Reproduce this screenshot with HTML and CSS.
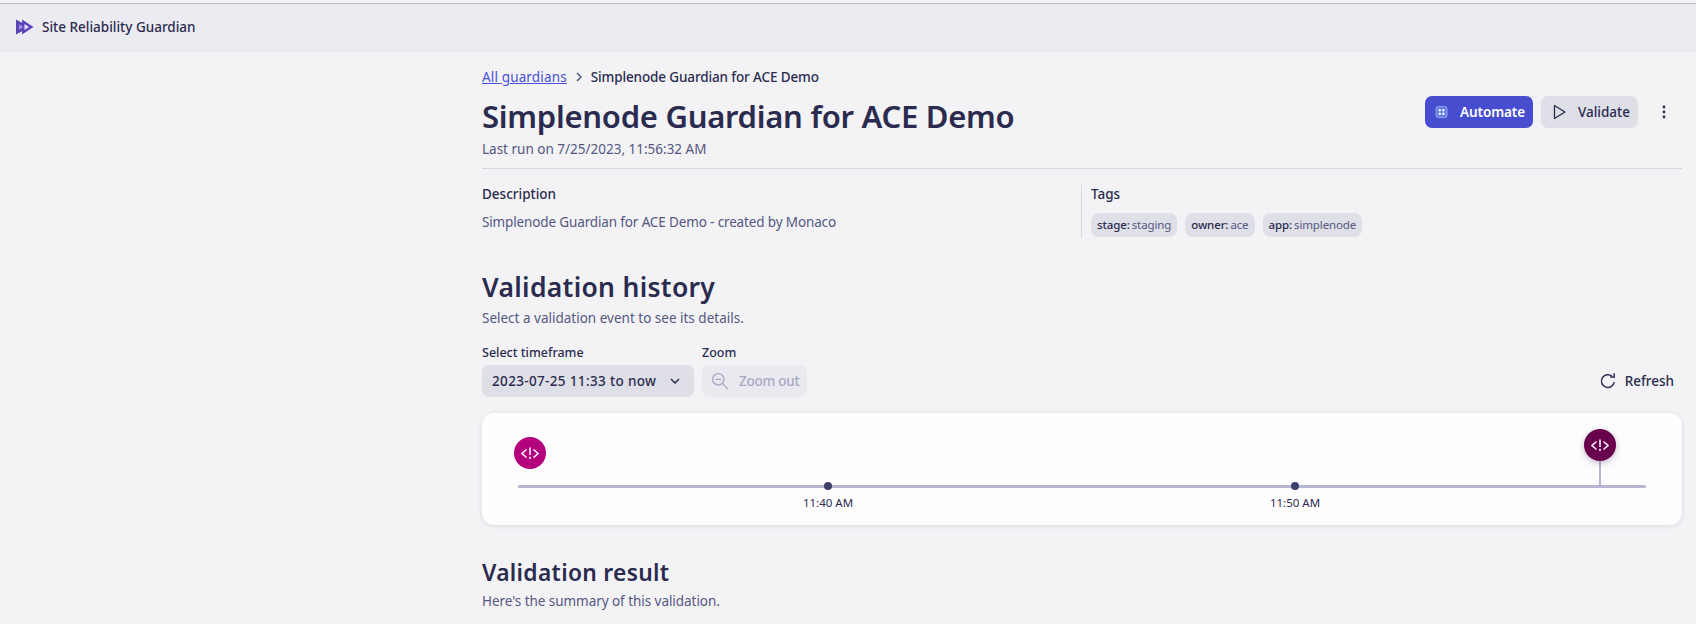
FILE: index.html
```html
<!DOCTYPE html>
<html lang="en">
<head>
<meta charset="utf-8">
<title>Site Reliability Guardian</title>
<link rel="stylesheet" href="styles.css">
</head>
<body>
<header class="appbar">
  <svg class="logo" width="19" height="18" viewBox="0 0 19 18"><path d="M1 1.500l6 3.200V1.500L18.500 9 7 16.500v-3.200l-6 3.200z" fill="#5b44b8"/><path d="M4 6l4.500 3L4 12z" fill="#9d8de0"/><path d="M9.500 6l4.500 3-4.500 3z" fill="#e4dff7"/></svg>
  <span class="appname">Site Reliability Guardian</span>
</header>
<main class="page">
  <nav class="crumbs">
    <a class="crumb-link" href="#">All guardians</a>
    <svg class="crumb-sep" width="8" height="10" viewBox="0 0 8 10"><path d="M2 1l4 4-4 4" fill="none" stroke="#54577f" stroke-width="1.500"/></svg>
    <span class="crumb-current">Simplenode Guardian for ACE Demo</span>
  </nav>
  <div class="titlerow">
    <div>
      <h1 class="title">Simplenode Guardian for ACE Demo</h1>
      <p class="muted lastrun">Last run on 7/25/2023, 11:56:32 AM</p>
    </div>
    <div class="actions">
      <button class="btn btn-primary">
        <svg width="18" height="18" viewBox="0 0 18 18"><rect x="1.500" y="1.500" width="15" height="15" rx="3" fill="#5f7be6" stroke="#b9c6f7"/><rect x="5" y="5" width="3" height="3" fill="#fff"/><rect x="10" y="5" width="3" height="3" fill="#fff"/><rect x="5" y="10" width="3" height="3" fill="#fff"/><rect x="10" y="10" width="3" height="3" fill="#fff"/></svg>
        <span>Automate</span>
      </button>
      <button class="btn btn-neutral">
        <svg width="16" height="16" viewBox="0 0 16 16"><path d="M3.500 1.500v13L14 8z" fill="none" stroke="#2a2b4e" stroke-width="1.300" stroke-linejoin="round"/></svg>
        <span>Validate</span>
      </button>
      <button class="btn-more" aria-label="More">
        <svg width="4" height="14" viewBox="0 0 4 14"><circle cx="2" cy="2" r="1.400"/><circle cx="2" cy="7" r="1.400"/><circle cx="2" cy="12" r="1.400"/></svg>
      </button>
    </div>
  </div>
  <hr class="rule">
  <section class="meta">
    <div class="meta-desc">
      <h3 class="label-strong">Description</h3>
      <p class="muted desc-text">Simplenode Guardian for ACE Demo - created by Monaco</p>
    </div>
    <div class="meta-tags">
      <h3 class="label-strong">Tags</h3>
      <div class="chips">
        <span class="chip"><b>stage:</b> staging</span>
        <span class="chip"><b>owner:</b> ace</span>
        <span class="chip"><b>app:</b> simplenode</span>
      </div>
    </div>
  </section>
  <h2 class="h2">Validation history</h2>
  <p class="muted sub">Select a validation event to see its details.</p>
  <div class="controls">
    <div class="field">
      <label class="field-label">Select timeframe</label>
      <button class="select"><span class="select-text">2023-07-25 11:33 to now</span>
        <svg width="10" height="6" viewBox="0 0 10 6"><path d="M1 1l4 4 4-4" fill="none" stroke="#2a2b4e" stroke-width="1.500"/></svg>
      </button>
    </div>
    <div class="field">
      <label class="field-label">Zoom</label>
      <button class="btn btn-disabled">
        <svg width="18" height="18" viewBox="0 0 16 16" fill="none" stroke="#a8a8c4" stroke-width="1.200"><circle cx="6.500" cy="6.500" r="5"/><path d="M10.300 10.300L15 15M4 6.500h5"/></svg>
        <span class="nowrap">Zoom out</span>
      </button>
    </div>
    <button class="refresh">
      <svg width="18" height="18" viewBox="0 0 16 16" fill="none" stroke="#2a2b4e" stroke-width="1.300"><path d="M13.500 9a5.700 5.700 0 1 1-2-5.300"/><path d="M13.500 1v3.500H10"/></svg>
      <span>Refresh</span>
    </button>
  </div>
  <section class="card">
    <div class="timeline">
      <div class="axis"></div>
      <button class="marker marker-a" aria-label="Validation event">
        <svg width="32" height="32" viewBox="0 0 32 32" fill="none" stroke="#fff" stroke-width="1.500"><path d="M12.500 12.500L8 16.500l4.500 4M19.500 12.500l4.500 4-4.500 4M16 10.500V18M16 19.700V22"/></svg>
      </button>
      <div class="stem"></div>
      <button class="marker marker-b" aria-label="Validation event">
        <svg width="32" height="32" viewBox="0 0 32 32" fill="none" stroke="#fff" stroke-width="1.500"><path d="M12.500 12.500L8 16.500l4.500 4M19.500 12.500l4.500 4-4.500 4M16 10.500V18M16 19.700V22"/></svg>
      </button>
      <div class="tick tick-a"><i class="tick-dot"></i><span class="tick-label">11:40 AM</span></div>
      <div class="tick tick-b"><i class="tick-dot"></i><span class="tick-label">11:50 AM</span></div>
    </div>
  </section>
  <h2 class="h2b">Validation result</h2>
  <p class="muted sub sub-last">Here's the summary of this validation.</p>
</main>
</body>
</html>
```
FILE: styles.css
```css
* { box-sizing: border-box; }
html, body { height: 100%; }
body {
  margin: 0;
  overflow: hidden;
  background: #f3f3f6;
  color: #2a2b4e;
  font-family: "Noto Sans", "Open Sans", sans-serif;
  font-size: 14px;
  line-height: 20px;
}
h1, h2, h3, p { margin: 0; }
button { font: inherit; color: inherit; border: 0; background: none; padding: 0; }
.nowrap { white-space: nowrap; }

.appbar {
  height: 49px;
  margin-top: 3px;
  padding: 0 0 3px 15px;
  display: flex;
  align-items: center;
  gap: 8px;
  background: #ecebf2;
  border-top: 1px solid #bdbdc0;
}
.appname { font-weight: 500; font-size: 13.500px; }

.page { margin-left: 482px; width: 1200px; padding-top: 15px; }

.crumbs { display: flex; align-items: center; height: 20px; gap: 8px; font-size: 13.500px; letter-spacing: -0.130px; }
.crumb-link { color: #4650d8; letter-spacing: 0.150px; }
.crumb-current { font-weight: 500; }

.titlerow { display: flex; justify-content: space-between; align-items: flex-start; margin-top: 7px; }
.title { font-size: 31px; line-height: 44px; font-weight: 600; letter-spacing: -0.270px; }
.muted { color: #54577f; }
.lastrun { font-size: 13.500px; margin-top: 1px; }

.actions { display: flex; align-items: center; gap: 8px; margin-top: 2px; }
.btn {
  height: 32px;
  display: inline-flex;
  align-items: center;
  gap: 11px;
  padding: 0 8px 0 10px;
  border-radius: 7px;
  font-weight: 500;
  font-size: 13.500px;
}
.btn-primary { background: #474dcf; color: #fff; width: 108px; font-weight: 600; letter-spacing: -0.100px; gap: 12px; }
.btn-neutral { background: #dfdfe8; width: 97px; }
.btn-more { width: 36px; height: 32px; display: inline-flex; align-items: center; justify-content: center; fill: #2a2b4e; }
.btn-disabled { background: #e9e9ef; color: #a8a8c4; width: 105px; padding: 0 0 0 9px; gap: 10px; letter-spacing: -0.250px; }

.rule { margin: 9px 0 0; border: 0; height: 1px; background: #d6d6de; }

.meta { display: flex; margin-top: 16px; height: 53px; }
.meta-desc { width: 599px; }
.meta-tags { border-left: 1px solid #d6d6de; padding-left: 9px; }
.label-strong { font-size: 13.500px; line-height: 20px; font-weight: 500; margin-top: -1px; }
.desc-text { font-size: 13.500px; margin-top: 8px; letter-spacing: -0.140px; }
.chips { display: flex; gap: 8px; margin-top: 9px; }
.chip {
  height: 24px;
  display: inline-flex;
  align-items: center;
  gap: 2px;
  padding: 0 6px;
  border-radius: 8px;
  background: #dfdfe8;
  color: #54577f;
  font-size: 11.500px;
  letter-spacing: -0.120px;
  white-space: nowrap;
}
.chip b { font-weight: 500; color: #2a2b4e; }

.h2 { font-size: 26.500px; line-height: 36px; font-weight: 600; margin-top: 31px; letter-spacing: 0.300px; }
.sub { font-size: 13.500px; line-height: 20px; margin-top: 3px; }
.sub-last { letter-spacing: -0.050px; margin-top: 2px; }

.controls { display: flex; align-items: flex-end; gap: 8px; margin-top: 15px; }
.field { display: flex; flex-direction: column; gap: 2px; }
.field-label { font-size: 12.500px; line-height: 20px; font-weight: 500; }
.select {
  width: 212px;
  height: 32px;
  padding: 0 14px 0 10px;
  display: flex;
  align-items: center;
  justify-content: space-between;
  border-radius: 7px;
  background: #dfdfe8;
  font-weight: 500;
  font-size: 13.500px;
  letter-spacing: 0.350px;
}
.refresh { margin-left: auto; height: 32px; padding-right: 8px; display: inline-flex; align-items: center; gap: 8px; font-weight: 500; font-size: 13.500px; }

.card {
  margin-top: 16px;
  height: 112px;
  border-radius: 12px;
  background: #fdfdfe;
  box-shadow: 0 1px 4px rgba(40, 40, 80, 0.14);
}
.timeline { position: relative; height: 100%; }
.axis { position: absolute; left: 36px; right: 36px; top: 72px; height: 3px; border-radius: 2px; background: #b7b6d0; }
.marker {
  position: absolute;
  width: 32px;
  height: 32px;
  border-radius: 50%;
  display: flex;
  align-items: center;
  justify-content: center;
}
.marker-a { left: 32px; top: 24px; background: #b5007d; }
.marker-b { left: 1102px; top: 16px; background: #68004e; box-shadow: 0 2px 6px rgba(40, 40, 80, 0.3); }
.stem { position: absolute; left: 1117px; top: 46px; width: 2px; height: 27px; background: #b7b6d0; }
.tick { position: absolute; top: 69px; width: 80px; display: flex; flex-direction: column; align-items: center; }
.tick-a { left: 306px; }
.tick-b { left: 773px; }
.tick-dot { width: 8px; height: 8px; border-radius: 50%; background: #3d3f6b; }
.tick-label { font-size: 11.500px; line-height: 16px; margin-top: 5px; }

.h2b { font-size: 22.800px; line-height: 32px; font-weight: 600; margin-top: 32px; letter-spacing: 0.300px; }
```
